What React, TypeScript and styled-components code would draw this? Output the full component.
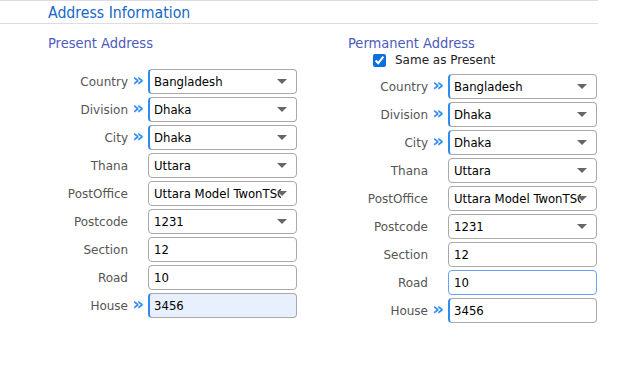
import styled, { createGlobalStyle } from "styled-components";

const GlobalStyle = createGlobalStyle`
  html, body {
    margin: 0;
    padding: 0;
    background: #ffffff;
  }
  body {
    font-family: "DejaVu Sans", Verdana, sans-serif;
  }
`;

const Page = styled.div`
  width: 630px;
  height: 365px;
  overflow: hidden;
`;

const Header = styled.div`
  width: 598px;
  height: 24px;
  border-top: 1px solid #dcdce8;
  border-bottom: 1px solid #dcdce8;
  display: flex;
  align-items: center;
  padding-left: 48px;
  box-sizing: border-box;
`;

const Title = styled.h2`
  margin: 0;
  font-family: "DejaVu Sans Condensed", "DejaVu Sans", sans-serif;
  font-size: 15.7px;
  font-weight: normal;
  color: #1668c9;
`;

const Columns = styled.div`
  display: flex;
  padding-left: 48px;
  padding-top: 10px;
`;

const Column = styled.section`
  flex: 0 0 300px;
  width: 300px;
  display: flex;
  flex-direction: column;
`;

const Subtitle = styled.h3<{ $gap: number }>`
  margin: 0 0 ${(p) => p.$gap}px 0;
  font-family: "DejaVu Sans Condensed", "DejaVu Sans", sans-serif;
  font-size: 14.5px;
  line-height: 18px;
  font-weight: normal;
  color: #4a5bbd;
`;

const CheckRow = styled.label`
  display: flex;
  align-items: center;
  gap: 9px;
  margin: 0 0 6px 25px;
  height: 16px;
  font-size: 12px;
  color: #222;
`;

const Check = styled.input`
  margin: 0;
  width: 13px;
  height: 13px;
  accent-color: #0b6fe0;
`;

const Rows = styled.div`
  display: flex;
  flex-direction: column;
  gap: 3px;
`;

const Row = styled.div`
  display: grid;
  grid-template-columns: 80px 20px 149px;
  align-items: center;
  height: 25px;
`;

const Label = styled.span`
  text-align: right;
  font-size: 12px;
  color: #555;
`;

const Marker = styled.span`
  font-size: 18px;
  font-weight: bold;
  color: #2f8cf2;
  text-align: center;
  line-height: 1;
  padding-bottom: 3px;
`;

const fieldBase = `
  box-sizing: border-box;
  width: 149px;
  height: 25px;
  margin: 0;
  border-radius: 4px;
  font-family: "DejaVu Sans Condensed", "DejaVu Sans", sans-serif;
  font-size: 13px;
  color: #000;
  outline: none;
`;

const TextField = styled.input<{ $required?: boolean; $focused?: boolean; $filled?: boolean }>`
  ${fieldBase}
  padding: 0 0 0 ${(p) => (p.$required ? 4 : 5)}px;
  border: 1px solid ${(p) => (p.$focused ? "#6aa2f2" : "#a9a9a9")};
  border-left: ${(p) => (p.$required ? "2px solid #2d8cf0" : undefined)};
  background: ${(p) => (p.$filled ? "#e8f0fe" : "#fff")};
`;

const SelectWrap = styled.div`
  position: relative;
  width: 149px;
  height: 25px;

  &::after {
    content: "";
    position: absolute;
    right: 10px;
    top: 10px;
    border-left: 5px solid transparent;
    border-right: 5px solid transparent;
    border-top: 5px solid #666;
    pointer-events: none;
  }
`;

const SelectField = styled.select<{ $required?: boolean }>`
  ${fieldBase}
  appearance: none;
  -webkit-appearance: none;
  background: #fff;
  padding: 0 15px 0 ${(p) => (p.$required ? 4 : 5)}px;
  border: 1px solid #a9a9a9;
  border-left: ${(p) => (p.$required ? "2px solid #2d8cf0" : undefined)};
`;

type Field = {
  label: string;
  value: string;
  select?: boolean;
  required?: boolean;
  focused?: boolean;
  filled?: boolean;
};

const baseFields: Field[] = [
  { label: "Country", value: "Bangladesh", select: true, required: true },
  { label: "Division", value: "Dhaka", select: true, required: true },
  { label: "City", value: "Dhaka", select: true, required: true },
  { label: "Thana", value: "Uttara", select: true },
  { label: "PostOffice", value: "Uttara Model TwonTSO", select: true },
  { label: "Postcode", value: "1231", select: true },
  { label: "Section", value: "12" },
  { label: "Road", value: "10" },
  { label: "House", value: "3456", required: true },
];

const presentFields = baseFields.map((f) =>
  f.label === "House" ? { ...f, filled: true } : f
);

const permanentFields = baseFields.map((f) =>
  f.label === "Road" ? { ...f, focused: true } : f
);

function FieldRow({ field }: { field: Field }) {
  return (
    <Row>
      <Label>{field.label}</Label>
      <Marker>{field.required ? "»" : ""}</Marker>
      {field.select ? (
        <SelectWrap>
          <SelectField $required={field.required} defaultValue={field.value}>
            <option value={field.value}>{field.value}</option>
          </SelectField>
        </SelectWrap>
      ) : (
        <TextField
          $required={field.required}
          $focused={field.focused}
          $filled={field.filled}
          defaultValue={field.value}
        />
      )}
    </Row>
  );
}

export default function App() {
  return (
    <Page>
      <GlobalStyle />
      <Header>
        <Title>Address Information</Title>
      </Header>
      <Columns>
        <Column>
          <Subtitle $gap={17}>Present Address</Subtitle>
          <Rows>
            {presentFields.map((f) => (
              <FieldRow key={f.label} field={f} />
            ))}
          </Rows>
        </Column>
        <Column>
          <Subtitle $gap={0}>Permanent Address</Subtitle>
          <CheckRow>
            <Check type="checkbox" defaultChecked />
            Same as Present
          </CheckRow>
          <Rows>
            {permanentFields.map((f) => (
              <FieldRow key={f.label} field={f} />
            ))}
          </Rows>
        </Column>
      </Columns>
    </Page>
  );
}
